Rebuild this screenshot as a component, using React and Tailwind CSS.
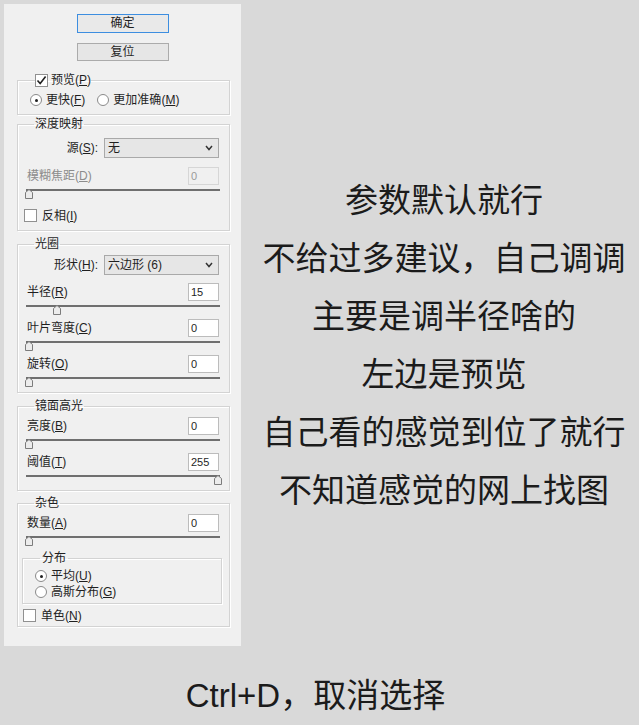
import React from 'react'

// shortcut letter, e.g. 预览(P)
const K = ({ c }) => (
  <>
    (<u className="underline-offset-1">{c}</u>)
  </>
)

const Check = ({ checked }) => (
  <span className="flex h-[13px] w-[13px] shrink-0 items-center justify-center border border-[#909090] bg-white">
    {checked && (
      <svg width="11" height="11" viewBox="0 0 11 11">
        <path d="M1.5 5.5 L4.2 8.6 L9.6 1.6" fill="none" stroke="#1f1f1f" strokeWidth="1.6" />
      </svg>
    )}
  </span>
)

const Radio = ({ on }) => (
  <span className="flex h-[12px] w-[12px] shrink-0 items-center justify-center rounded-full border border-[#8a8a8a] bg-white">
    {on && <span className="h-[3px] w-[3px] rounded-full bg-[#1f1f1f]" />}
  </span>
)

const Slider = ({ thumb, className = '' }) => (
  <div className={`relative ml-[-1px] h-[10px] ${className}`}>
    <div className="mt-[4px] h-[2px] bg-[#6f6f6f]" />
    <svg className={`absolute top-0 ${thumb}`} width="8" height="10" viewBox="0 0 8 10">
      <path d="M4 0.5 L7.5 3.5 L7.5 9.5 L0.5 9.5 L0.5 3.5 Z" fill="#ececec" stroke="#7c7c7c" />
    </svg>
  </div>
)

const Field = ({ label, value, disabled, className = '' }) => (
  <div className={`flex h-[18px] items-center justify-between ${className}`}>
    <span className={disabled ? 'text-[#8c8c8c]' : ''}>{label}</span>
    <span
      className={`mr-[1px] flex h-[18px] w-[31px] items-center border pl-[2px] text-[11px] ${
        disabled ? 'border-[#d6d6d6] bg-[#f0f0f0] text-[#9a9a9a]' : 'border-[#bcbcbc] bg-white'
      }`}
    >
      {value}
    </span>
  </div>
)

const Select = ({ label, value, className = '' }) => (
  <div className={`flex h-[20px] items-center justify-end gap-[6px] ${className}`}>
    <span>{label}</span>
    <span className="mr-[1px] flex h-[20px] w-[115px] items-center justify-between border border-[#a9a9a9] bg-[#e6e6e6] pl-[3px] pr-[5px]">
      <span>{value}</span>
      <svg width="8" height="6" viewBox="0 0 8 6">
        <path d="M1 1 L4 4.5 L7 1" fill="none" stroke="#333" strokeWidth="1.5" />
      </svg>
    </span>
  </div>
)

const Group = ({ legend, legendClass = 'ml-[7px] px-[1px]', className = '', children }) => (
  <fieldset
    className={`border border-[#d3d3d3] px-[9px] shadow-[inset_1px_1px_0_#fff,1px_1px_0_#fff] ${className}`}
  >
    <legend className={`leading-[14px] ${legendClass}`}>{legend}</legend>
    {children}
  </fieldset>
)

function LensBlurPanel() {
  return (
    <div className="ml-[4px] mt-[4px] flex h-[642px] w-[237px] flex-col bg-[#f0f0f0] pt-[10px] text-[12px] leading-[14px] text-[#1f1f1f]">
      <button className="mx-auto h-[19px] w-[92px] border border-[#3d8ee0] bg-[#e9e9e9] leading-[17px]">
        确定
      </button>
      <button className="mx-auto mt-[10px] h-[18px] w-[92px] border border-[#ababab] bg-[#e6e6e6] leading-[16px]">
        复位
      </button>

      <Group
        className="ml-[13px] mr-[11px] mt-[12px] pb-[7px] pt-[6px]"
        legendClass="ml-[8px]"
        legend={
          <span className="flex items-center gap-[3px]">
            <Check checked />
            <span>
              预览<K c="P" />
            </span>
          </span>
        }
      >
        <div className="ml-[3px] flex h-[14px] items-center">
          <Radio on />
          <span className="ml-[4px]">
            更快<K c="F" />
          </span>
          <span className="ml-[12px]">
            <Radio />
          </span>
          <span className="ml-[4px]">
            更加准确<K c="M" />
          </span>
        </div>
      </Group>

      <Group className="ml-[13px] mr-[11px] mt-[2px] pb-[8px] pt-[7px]" legend="深度映射">
        <Select label={<>源<K c="S" />:</>} value="无" />
        <Field className="mt-[9px]" disabled label={<>模糊焦距<K c="D" /></>} value="0" />
        <Slider className="mt-[3px]" thumb="left-[-1px]" />
        <div className="ml-[-3px] mt-[10px] flex h-[13px] items-center gap-[5px]">
          <Check />
          <span>
            反相<K c="I" />
          </span>
        </div>
      </Group>

      <Group className="ml-[13px] mr-[11px] mt-[6px] pb-[5px] pt-[4px]" legend="光圈">
        <Select label={<>形状<K c="H" />:</>} value="六边形 (6)" />
        <Field className="mt-[8px]" label={<>半径<K c="R" /></>} value="15" />
        <Slider className="mt-[4px]" thumb="left-[27px]" />
        <Field className="mt-[4px]" label={<>叶片弯度<K c="C" /></>} value="0" />
        <Slider className="mt-[4px]" thumb="left-[-1px]" />
        <Field className="mt-[4px]" label={<>旋转<K c="O" /></>} value="0" />
        <Slider className="mt-[4px]" thumb="left-[-1px]" />
      </Group>

      <Group className="ml-[13px] mr-[11px] mt-[6px] pb-[5px] pt-[4px]" legend="镜面高光">
        <Field label={<>亮度<K c="B" /></>} value="0" />
        <Slider className="mt-[4px]" thumb="left-[-1px]" />
        <Field className="mt-[4px]" label={<>阈值<K c="T" /></>} value="255" />
        <Slider className="mt-[4px]" thumb="left-[188px]" />
      </Group>

      <Group className="ml-[13px] mr-[11px] mt-[5px] pb-[4px] pt-[4px]" legend="杂色">
        <Field label={<>数量<K c="A" /></>} value="0" />
        <Slider className="mt-[4px]" thumb="left-[-1px]" />
        <Group
          className="ml-[-5px] mr-[-2px] mt-[5px] px-[12px] pb-[4px] pt-[4px]"
          legendClass="ml-[5px] px-[2px]"
          legend="分布"
        >
          <div className="flex h-[14px] items-center gap-[4px]">
            <Radio on />
            <span>
              平均<K c="U" />
            </span>
          </div>
          <div className="mt-[2px] flex h-[14px] items-center gap-[4px]">
            <Radio />
            <span>
              高斯分布<K c="G" />
            </span>
          </div>
        </Group>
        <div className="ml-[-4px] mt-[5px] flex h-[13px] items-center gap-[5px]">
          <Check />
          <span>
            单色<K c="N" />
          </span>
        </div>
      </Group>
    </div>
  )
}

const tips = [
  '参数默认就行',
  '不给过多建议，自己调调',
  '主要是调半径啥的',
  '左边是预览',
  '自己看的感觉到位了就行',
  '不知道感觉的网上找图',
]

export default function App() {
  return (
    <div className="h-[725px] w-[639px] overflow-hidden bg-[#d9d9d9] font-[family-name:'Liberation_Sans','Noto_Sans_CJK_SC',sans-serif]">
      <div className="flex">
        <LensBlurPanel />
        <div className="flex-1 pl-[8px] pt-[172px] text-center text-[33px] leading-[58px] text-[#1b1b1b]">
          {tips.map((t) => (
            <p key={t}>{t}</p>
          ))}
        </div>
      </div>
      <p className="pr-[8px] pt-[21px] text-center text-[33px] leading-[58px] text-[#1b1b1b]">
        Ctrl+D，取消选择
      </p>
    </div>
  )
}
